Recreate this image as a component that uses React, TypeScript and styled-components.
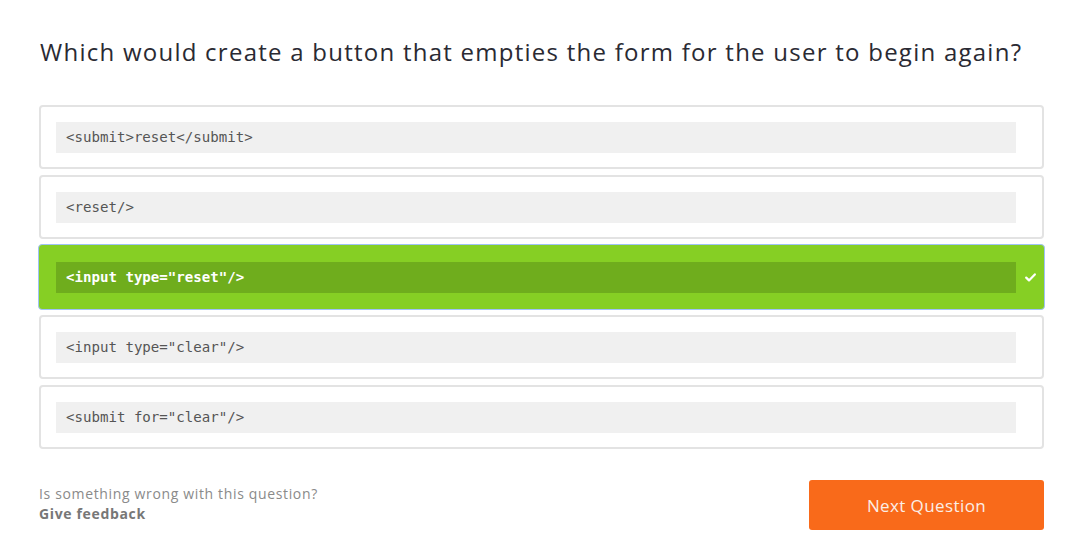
import React from "react";
import styled, { createGlobalStyle } from "styled-components";

const Global = createGlobalStyle`
  html, body { margin: 0; padding: 0; background: #ffffff; }
  body { font-family: "Open Sans", sans-serif; }
`;

const Page = styled.div`
  width: 1076px;
  height: 560px;
  box-sizing: border-box;
  padding: 36px 32px 0 39px;
  display: flex;
  flex-direction: column;
`;

const Title = styled.h1`
  margin: 0 0 37px 1px;
  font-family: "Open Sans", sans-serif;
  font-weight: 400;
  font-size: 24px;
  line-height: 32px;
  color: #2a2a33;
  letter-spacing: 1.25px;
  white-space: nowrap;
`;

const Options = styled.div`
  display: flex;
  flex-direction: column;
  gap: 6px;
`;

const Card = styled.div<{ $selected?: boolean }>`
  height: 64px;
  box-sizing: border-box;
  border-radius: 4px;
  display: flex;
  align-items: center;
  padding: 0 0 0 15px;
  ${(p) =>
    p.$selected
      ? `
    background: #86cf24;
    border: 1px solid #9fc2f7;
    margin: -1px -1px;
    height: 66px;
    padding-left: 17px;
  `
      : `
    background: #ffffff;
    border: 2px solid #e3e3e3;
  `}
`;

const Code = styled.div<{ $selected?: boolean }>`
  width: 960px;
  height: 31px;
  box-sizing: border-box;
  padding: 0 10px;
  display: flex;
  align-items: center;
  font-family: "DejaVu Sans Mono", monospace;
  font-size: 14.1px;
  white-space: pre;
  background: ${(p) => (p.$selected ? "#6fad1d" : "#f0f0f0")};
  color: ${(p) => (p.$selected ? "#ffffff" : "#555555")};
  font-weight: ${(p) => (p.$selected ? 700 : 400)};
`;

const Check = styled.span`
  margin-left: 4px;
  width: 20px;
  display: flex;
  justify-content: center;
  color: #ffffff;
`;

const Footer = styled.div`
  margin-top: 31px;
  display: flex;
  justify-content: space-between;
  align-items: flex-start;
`;

const FeedbackBlock = styled.div`
  padding-top: 4px;
  display: flex;
  flex-direction: column;
  font-family: "Open Sans", sans-serif;
  font-size: 14px;
  line-height: 20px;
  letter-spacing: 0.65px;
`;

const Question = styled.span`
  color: #8a8a8a;
`;

const FeedbackLink = styled.a`
  color: #777777;
  font-weight: 700;
  text-decoration: none;
`;

const NextButton = styled.button`
  width: 235px;
  height: 50px;
  border: none;
  border-radius: 3px;
  background: #f96a1a;
  color: #fbeee6;
  font-family: "Open Sans", sans-serif;
  font-size: 17px;
  letter-spacing: 0.4px;
  cursor: pointer;
`;

const options = [
  '<submit>reset</submit>',
  '<reset/>',
  '<input type="reset"/>',
  '<input type="clear"/>',
  '<submit for="clear"/>',
];

export default function App() {
  return (
    <>
      <Global />
      <Page>
        <Title>Which would create a button that empties the form for the user to begin again?</Title>
        <Options>
          {options.map((o, i) => {
            const sel = i === 2;
            return (
              <Card key={i} $selected={sel}>
                <Code $selected={sel}>{o}</Code>
                {sel && (
                  <Check>
                    <svg width="11" height="9" viewBox="0 0 11 9">
                      <path d="M1.2 4.6 L4 7.4 L9.8 1.4" fill="none" stroke="#fff" strokeWidth="2.2" strokeLinecap="round" strokeLinejoin="round" />
                    </svg>
                  </Check>
                )}
              </Card>
            );
          })}
        </Options>
        <Footer>
          <FeedbackBlock>
            <Question>Is something wrong with this question?</Question>
            <FeedbackLink href="#">Give feedback</FeedbackLink>
          </FeedbackBlock>
          <NextButton>Next Question</NextButton>
        </Footer>
      </Page>
    </>
  );
}
